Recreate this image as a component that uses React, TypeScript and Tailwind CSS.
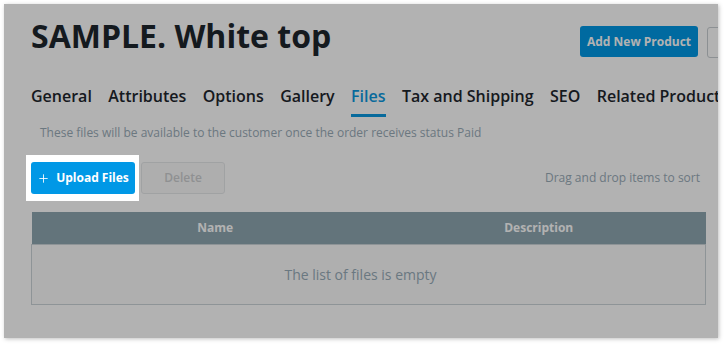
import { Plus } from "lucide-react";

const tabs = [
  "General",
  "Attributes",
  "Options",
  "Gallery",
  "Files",
  "Tax and Shipping",
  "SEO",
  "Related Products",
];

export default function App() {
  return (
    <div
      className="w-[724px] h-[344px] bg-white p-[4px] overflow-hidden"
      style={{ fontFamily: '"Open Sans", "Liberation Sans", sans-serif' }}
    >
      <div className="relative w-[714px] h-[334px] bg-white overflow-hidden shadow-[1px_1px_4px_rgba(0,0,0,0.25)]">
        {/* page */}
        <div className="pl-[27px] pt-[10px] w-[800px]">
          <div className="flex items-start">
            <div className="w-[667px] flex items-start">
              <h1 className="text-[32px] font-bold text-[#1e262d] leading-[44px]">
                SAMPLE. White top
              </h1>
              <button className="ml-auto mt-[12px] h-[31px] w-[118px] rounded-[3px] bg-[#0098e6] text-white text-[12px] font-bold">
                Add New Product
              </button>
            </div>
            <button className="ml-[9px] mt-[13px] h-[31px] px-[10px] rounded-[3px] bg-white border border-[#c9cfd3] text-[#1e262d] text-[12px] font-semibold">
              Duplicate
            </button>
          </div>

          <div className="mt-[27px] flex gap-[16.4px]">
            {tabs.map((t) => (
              <div
                key={t}
                className={`text-[16px] font-semibold leading-[23px] pb-[6px] border-b-[3px] whitespace-nowrap ${
                  t === "Files"
                    ? "text-[#0b98e0] border-[#0b98e0]"
                    : "text-[#1e262d] border-transparent"
                }`}
              >
                {t}
              </div>
            ))}
          </div>

          <p className="mt-[7px] pl-[9px] text-[12px] text-[#9aacb8] leading-[18px]">
            These files will be available to the customer once the order receives status Paid
          </p>

          <div className="mt-[20px] w-[675px] flex items-center">
            <div className="relative z-20">
              <div className="absolute -left-[5px] -right-[4px] -top-[7px] -bottom-[7px] bg-white" />
              <button className="relative h-[32px] w-[104px] rounded-[3px] bg-[#0098e6] text-white text-[12px] font-bold flex items-center justify-center gap-[6px]">
                <Plus size={13} strokeWidth={1.6} />
                Upload Files
              </button>
            </div>
            <button className="ml-[6px] h-[32px] w-[84px] rounded-[3px] bg-[#fafafa] border border-[#e6e8ea] text-[#cdcfd1] text-[12px] font-semibold">
              Delete
            </button>
            <span className="ml-auto mr-[6px] text-[12px] text-[#9aacb8]">
              Drag and drop items to sort
            </span>
          </div>

          <table className="mt-[18px] w-[675px] border-collapse">
            <thead>
              <tr className="bg-[#8fa7b1] h-[32px] text-white text-[12px] font-bold">
                <th className="w-[368px] font-bold">Name</th>
                <th className="w-[280px] font-bold">Description</th>
                <th className="w-[27px]" />
              </tr>
            </thead>
            <tbody>
              <tr className="h-[60px]">
                <td
                  colSpan={3}
                  className="border border-[#ccd4d8] bg-[#fbfbfb] text-center text-[14px] text-[#98acb9] pr-[16px]"
                >
                  The list of files is empty
                </td>
              </tr>
            </tbody>
          </table>
        </div>

        {/* tour overlay */}
        <div className="absolute inset-0 bg-black/30 z-10 pointer-events-none" />
      </div>
    </div>
  );
}
